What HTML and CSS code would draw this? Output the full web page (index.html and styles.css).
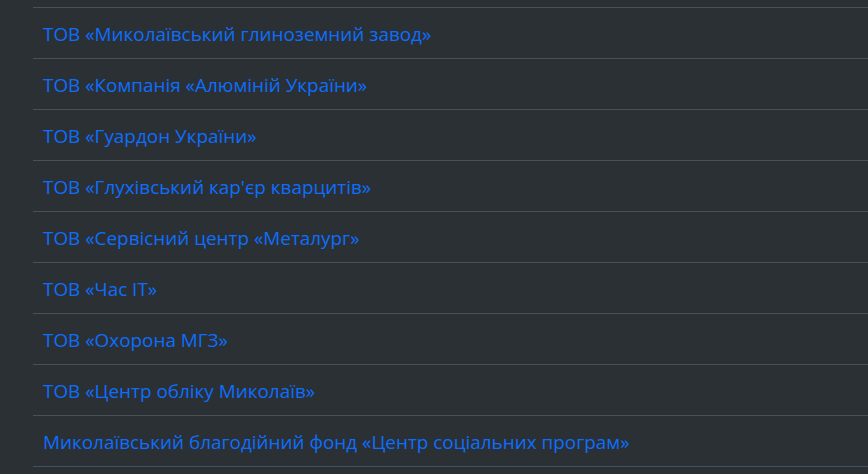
FILE: index.html
```html
<!DOCTYPE html>
<html lang="uk">
<head>
<meta charset="utf-8">
<link rel="stylesheet" href="styles.css">
</head>
<body>
<ul class="list">
<li class="item"><a href="#">ТОВ «Миколаївський глиноземний завод»</a></li>
<li class="item"><a href="#">ТОВ «Компанія «Алюміній України»</a></li>
<li class="item"><a href="#">ТОВ «Гуардон України»</a></li>
<li class="item"><a href="#">ТОВ «Глухівський кар'єр кварцитів»</a></li>
<li class="item"><a href="#">ТОВ «Сервісний центр «Металург»</a></li>
<li class="item"><a href="#">ТОВ «Час IT»</a></li>
<li class="item"><a href="#">ТОВ «Охорона МГЗ»</a></li>
<li class="item"><a href="#">ТОВ «Центр обліку Миколаїв»</a></li>
<li class="item"><a href="#">Миколаївський благодійний фонд «Центр соціальних програм»</a></li>
</ul>
</body>
</html>
```
FILE: styles.css
```css
html, body {
  margin: 0;
  padding: 0;
  background: #2b3035;
  height: 100%;
  overflow: hidden;
}
.list {
  list-style: none;
  margin: 7px 0 0 33px;
  padding: 0;
  border-top: 1px solid #495057;
}
.item {
  height: 50px;
  display: flex;
  align-items: center;
  padding-left: 10px;
  padding-top: 1px;
  box-sizing: border-box;
  height: 51px;
  border-bottom: 1px solid #495057;
}
.item a {
  font-family: "Open Sans", sans-serif;
  font-size: 18.9px;
  color: #0d6efd;
  text-decoration: none;
  white-space: nowrap;
}
```
